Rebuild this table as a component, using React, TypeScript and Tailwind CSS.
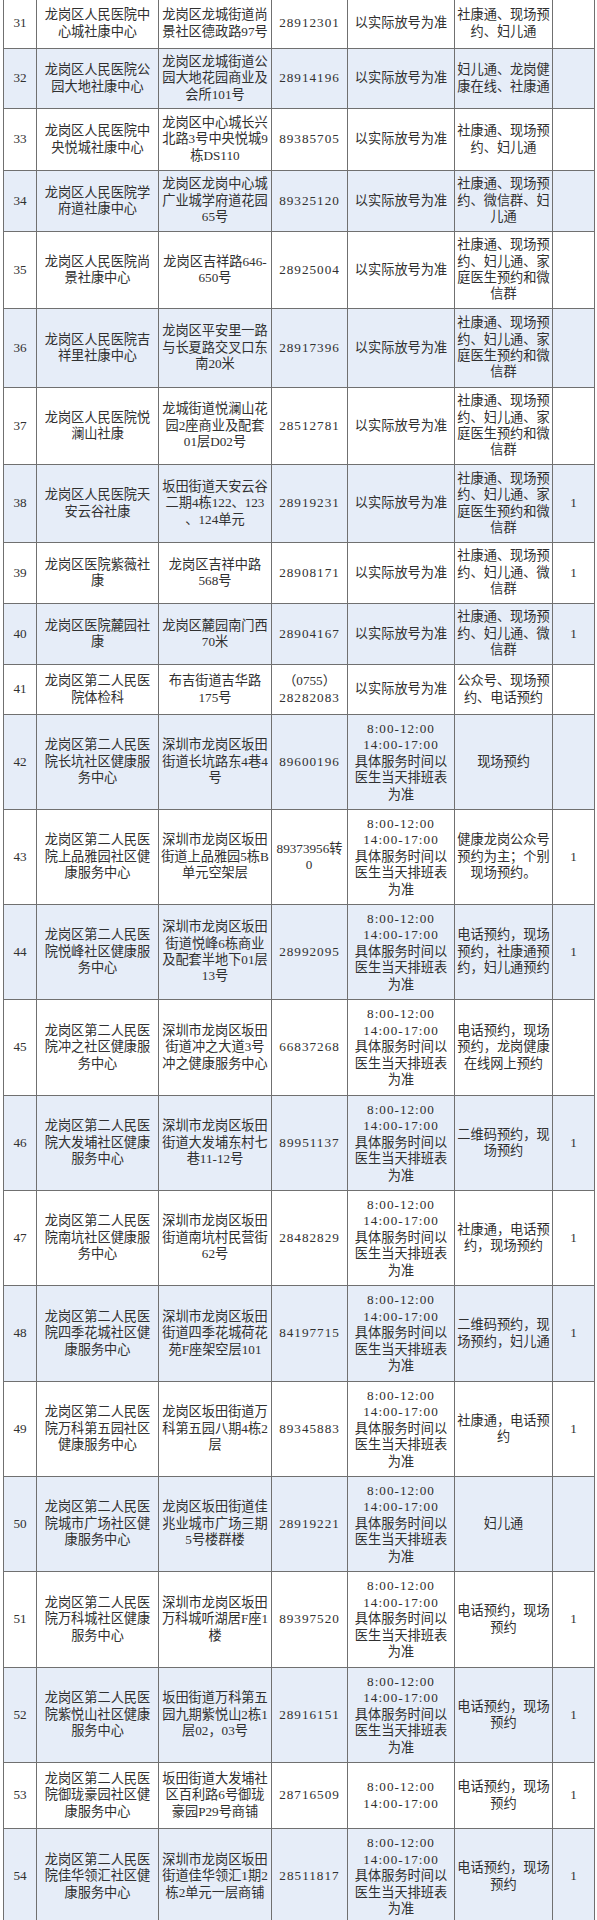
import React from "react";

type Row = {
  n: string;
  name: string[];
  addr: string[];
  phone: string[];
  time: string[];
  book: string[];
  last: string;
  h: string;
};

const T1 = ["以实际放号为准"];
const T5 = ["8:00-12:00", "14:00-17:00", "具体服务时间以", "医生当天排班表", "为准"];
const B4 = ["社康通、现场预", "约、妇儿通、家", "庭医生预约和微", "信群"];
const B3 = ["社康通、现场预", "约、妇儿通、微", "信群"];
const BP = ["电话预约，现场", "预约"];

const rows: Row[] = [
  { n: "31", name: ["龙岗区人民医院中", "心城社康中心"], addr: ["龙岗区龙城街道尚", "景社区德政路97号"], phone: ["28912301"], time: T1, book: ["社康通、现场预", "约、妇儿通"], last: "", h: "h-[50px]" },
  { n: "32", name: ["龙岗区人民医院公", "园大地社康中心"], addr: ["龙岗区龙城街道公", "园大地花园商业及", "会所101号"], phone: ["28914196"], time: T1, book: ["妇儿通、龙岗健", "康在线、社康通"], last: "", h: "h-[60px]" },
  { n: "33", name: ["龙岗区人民医院中", "央悦城社康中心"], addr: ["龙岗区中心城长兴", "北路3号中央悦城9", "栋DS110"], phone: ["89385705"], time: T1, book: ["社康通、现场预", "约、妇儿通"], last: "", h: "h-[62px]" },
  { n: "34", name: ["龙岗区人民医院学", "府道社康中心"], addr: ["龙岗区龙岗中心城", "广业城学府道花园", "65号"], phone: ["89325120"], time: T1, book: ["社康通、现场预", "约、微信群、妇", "儿通"], last: "", h: "h-[61px]" },
  { n: "35", name: ["龙岗区人民医院尚", "景社康中心"], addr: ["龙岗区吉祥路646-", "650号"], phone: ["28925004"], time: T1, book: B4, last: "", h: "h-[77px]" },
  { n: "36", name: ["龙岗区人民医院吉", "祥里社康中心"], addr: ["龙岗区平安里一路", "与长夏路交叉口东", "南20米"], phone: ["28917396"], time: T1, book: B4, last: "", h: "h-[79px]" },
  { n: "37", name: ["龙岗区人民医院悦", "澜山社康"], addr: ["龙城街道悦澜山花", "园2座商业及配套", "01层D02号"], phone: ["28512781"], time: T1, book: B4, last: "", h: "h-[77px]" },
  { n: "38", name: ["龙岗区人民医院天", "安云谷社康"], addr: ["坂田街道天安云谷", "二期4栋122、123", "、124单元"], phone: ["28919231"], time: T1, book: B4, last: "1", h: "h-[78px]" },
  { n: "39", name: ["龙岗区医院紫薇社", "康"], addr: ["龙岗区吉祥中路", "568号"], phone: ["28908171"], time: T1, book: B3, last: "1", h: "h-[61px]" },
  { n: "40", name: ["龙岗区医院麓园社", "康"], addr: ["龙岗区麓园南门西", "70米"], phone: ["28904167"], time: T1, book: B3, last: "1", h: "h-[61px]" },
  { n: "41", name: ["龙岗区第二人民医", "院体检科"], addr: ["布吉街道吉华路", "175号"], phone: ["（0755）", "28282083"], time: T1, book: ["公众号、现场预", "约、电话预约"], last: "", h: "h-[50px]" },
  { n: "42", name: ["龙岗区第二人民医", "院长坑社区健康服", "务中心"], addr: ["深圳市龙岗区坂田", "街道长坑路东4巷4", "号"], phone: ["89600196"], time: T5, book: ["现场预约"], last: "", h: "h-[95px]" },
  { n: "43", name: ["龙岗区第二人民医", "院上品雅园社区健", "康服务中心"], addr: ["深圳市龙岗区坂田", "街道上品雅园5栋B", "单元空架层"], phone: ["89373956转", "0"], time: T5, book: ["健康龙岗公众号", "预约为主；个别", "现场预约。"], last: "1", h: "h-[95px]" },
  { n: "44", name: ["龙岗区第二人民医", "院悦峰社区健康服", "务中心"], addr: ["深圳市龙岗区坂田", "街道悦峰6栋商业", "及配套半地下01层", "13号"], phone: ["28992095"], time: T5, book: ["电话预约，现场", "预约，社康通预", "约，妇儿通预约"], last: "1", h: "h-[95px]" },
  { n: "45", name: ["龙岗区第二人民医", "院冲之社区健康服", "务中心"], addr: ["深圳市龙岗区坂田", "街道冲之大道3号", "冲之健康服务中心"], phone: ["66837268"], time: T5, book: ["电话预约，现场", "预约，龙岗健康", "在线网上预约"], last: "", h: "h-[96px]" },
  { n: "46", name: ["龙岗区第二人民医", "院大发埔社区健康", "服务中心"], addr: ["深圳市龙岗区坂田", "街道大发埔东村七", "巷11-12号"], phone: ["89951137"], time: T5, book: ["二维码预约，现", "场预约"], last: "1", h: "h-[95px]" },
  { n: "47", name: ["龙岗区第二人民医", "院南坑社区健康服", "务中心"], addr: ["深圳市龙岗区坂田", "街道南坑村民营街", "62号"], phone: ["28482829"], time: T5, book: ["社康通，电话预", "约，现场预约"], last: "1", h: "h-[95px]" },
  { n: "48", name: ["龙岗区第二人民医", "院四季花城社区健", "康服务中心"], addr: ["深圳市龙岗区坂田", "街道四季花城荷花", "苑F座架空层101"], phone: ["84197715"], time: T5, book: ["二维码预约，现", "场预约，妇儿通"], last: "1", h: "h-[96px]" },
  { n: "49", name: ["龙岗区第二人民医", "院万科第五园社区", "健康服务中心"], addr: ["龙岗区坂田街道万", "科第五园八期4栋2", "层"], phone: ["89345883"], time: T5, book: ["社康通，电话预", "约"], last: "1", h: "h-[95px]" },
  { n: "50", name: ["龙岗区第二人民医", "院城市广场社区健", "康服务中心"], addr: ["龙岗区坂田街道佳", "兆业城市广场三期", "5号楼群楼"], phone: ["28919221"], time: T5, book: ["妇儿通"], last: "", h: "h-[95px]" },
  { n: "51", name: ["龙岗区第二人民医", "院万科城社区健康", "服务中心"], addr: ["深圳市龙岗区坂田", "万科城听湖居F座1", "楼"], phone: ["89397520"], time: T5, book: BP, last: "1", h: "h-[96px]" },
  { n: "52", name: ["龙岗区第二人民医", "院紫悦山社区健康", "服务中心"], addr: ["坂田街道万科第五", "园九期紫悦山2栋1", "层02，03号"], phone: ["28916151"], time: T5, book: BP, last: "1", h: "h-[95px]" },
  { n: "53", name: ["龙岗区第二人民医", "院御珑豪园社区健", "康服务中心"], addr: ["坂田街道大发埔社", "区百利路6号御珑", "豪园P29号商铺"], phone: ["28716509"], time: ["8:00-12:00", "14:00-17:00"], book: BP, last: "1", h: "h-[66px]" },
  { n: "54", name: ["龙岗区第二人民医", "院佳华领汇社区健", "康服务中心"], addr: ["深圳市龙岗区坂田", "街道佳华领汇1期2", "栋2单元一层商铺"], phone: ["28511817"], time: T5, book: BP, last: "1", h: "h-[96px]" },
];

const isClock = (s: string) => /^[0-9:\-]+$/.test(s);

function Lines({ lines }: { lines: string[] }) {
  return (
    <>
      {lines.map((l, i) => (
        <div key={i} className={isClock(l) ? "whitespace-nowrap tracking-[1px]" : "whitespace-nowrap"}>
          {l}
        </div>
      ))}
    </>
  );
}

const td = "border border-[#707070] text-center align-middle p-0";

export default function App() {
  return (
    <div className="w-[597px] h-[1920px] overflow-hidden bg-white">
      <table className="ml-[3px] -mt-[2px] w-[591px] table-fixed border-collapse text-[13.2px] leading-[16.4px] text-[#303030] font-['Liberation_Serif','Noto_Sans_CJK_SC',serif]">
        <colgroup>
          <col className="w-[33px]" />
          <col className="w-[122px]" />
          <col className="w-[113px]" />
          <col className="w-[76px]" />
          <col className="w-[107px]" />
          <col className="w-[98px]" />
          <col className="w-[42px]" />
        </colgroup>
        <tbody>
          {rows.map((r, i) => (
            <tr key={r.n} className={`${r.h} ${i % 2 === 1 ? "bg-[#e6edf8]" : "bg-white"}`}>
              <td className={td}>{r.n}</td>
              <td className={td}>
                <Lines lines={r.name} />
              </td>
              <td className={td}>
                <Lines lines={r.addr} />
              </td>
              <td className={td}>
                <Lines lines={r.phone} />
              </td>
              <td className={td}>
                <Lines lines={r.time} />
              </td>
              <td className={td}>
                <Lines lines={r.book} />
              </td>
              <td className={td}>{r.last}</td>
            </tr>
          ))}
        </tbody>
      </table>
    </div>
  );
}
